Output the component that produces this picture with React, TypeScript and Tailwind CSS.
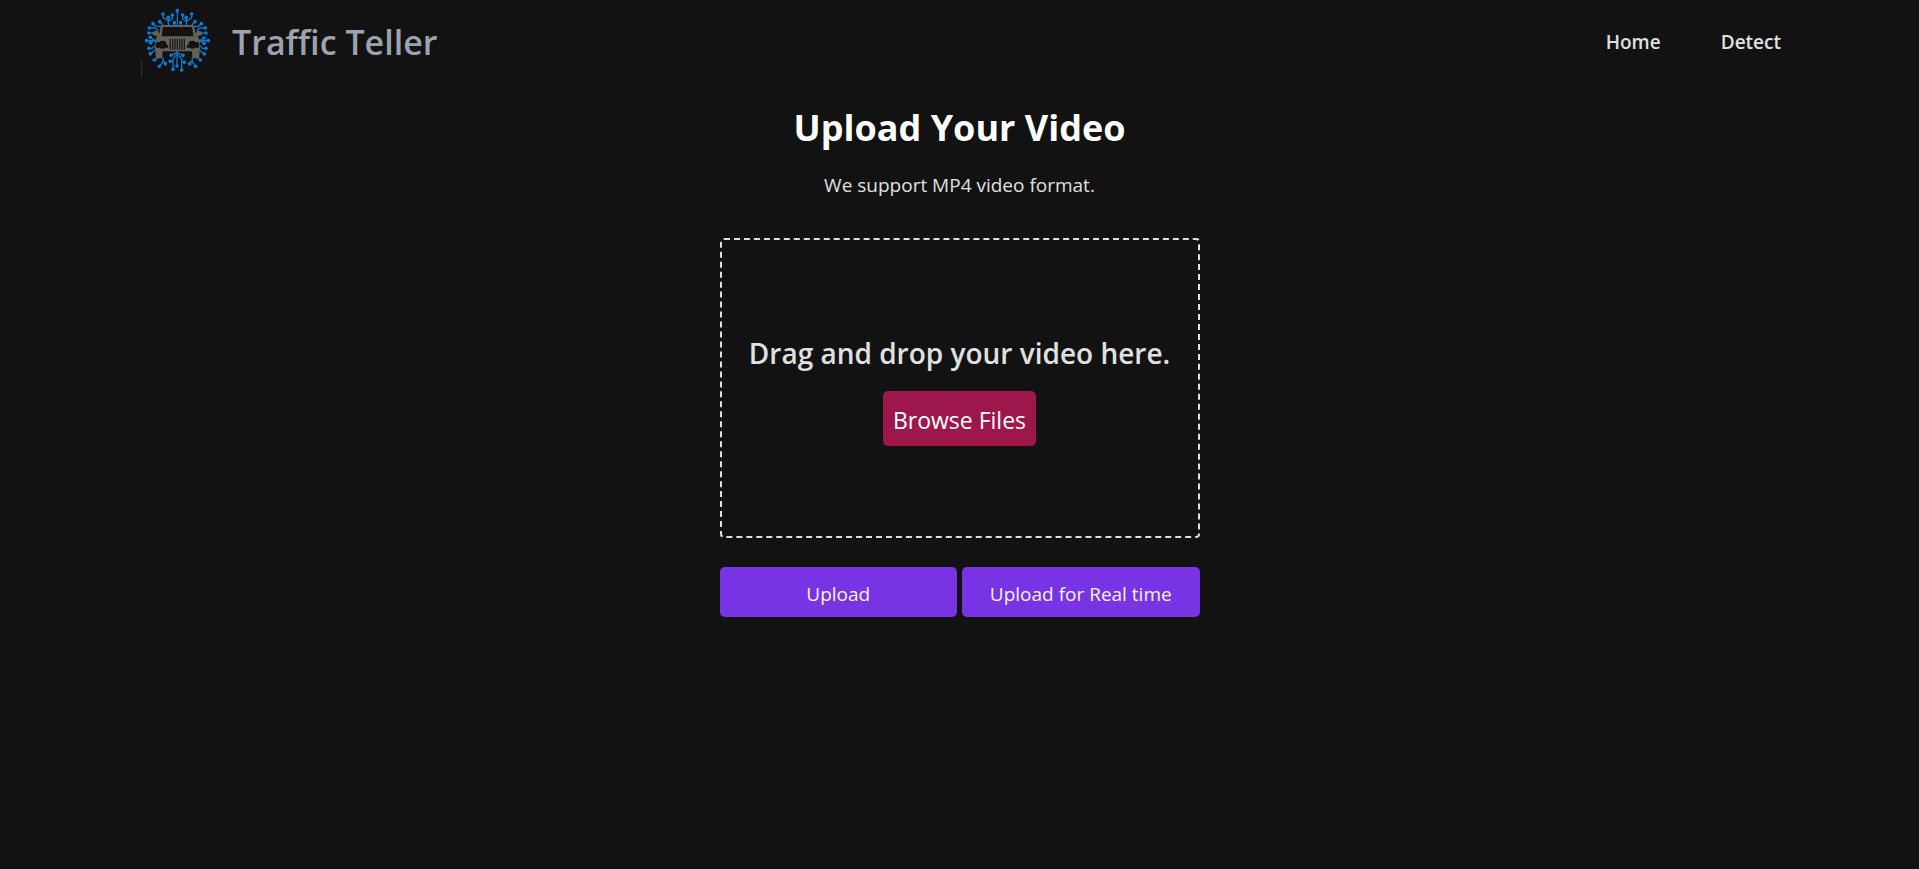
import { useRef } from "react";

type Trace = { d: string; x: number; y: number };

// Circuit traces radiating from the car; x and y place the terminal dot.
const traces: Trace[] = [
  { d: "M142 76V32", x: 142, y: 32 },
  { d: "M115 76V62L99 52V42", x: 99, y: 42 },
  { d: "M115 70V52", x: 115, y: 52 },
  { d: "M115 64L127 56V45", x: 127, y: 45 },
  { d: "M133 76V68", x: 133, y: 68 },
  { d: "M152 76V68", x: 152, y: 68 },
  { d: "M169 76V52", x: 169, y: 52 },
  { d: "M169 64L158 57V45", x: 158, y: 45 },
  { d: "M169 64L185 54V42", x: 185, y: 42 },
  { d: "M97 80V72L89 65", x: 89, y: 65 },
  { d: "M95 79H77L69 71", x: 69, y: 71 },
  { d: "M86 92L74 84H58", x: 58, y: 84 },
  { d: "M187 80V72L195 65", x: 195, y: 65 },
  { d: "M189 79H205L214 71", x: 214, y: 71 },
  { d: "M200 92L210 84H226", x: 226, y: 84 },
  { d: "M70 99H57", x: 57, y: 99 },
  { d: "M213 99H228", x: 228, y: 99 },
  { d: "M80 122H50", x: 50, y: 122 },
  { d: "M76 122L61 112", x: 61, y: 112 },
  { d: "M74 122L62 128", x: 62, y: 128 },
  { d: "M78 134L66 145H57", x: 57, y: 145 },
  { d: "M80 145L70 155L61 161", x: 61, y: 161 },
  { d: "M205 122H235", x: 235, y: 122 },
  { d: "M208 122L222 114", x: 222, y: 114 },
  { d: "M208 122L222 130", x: 222, y: 130 },
  { d: "M207 134L217 145H228", x: 228, y: 145 },
  { d: "M205 145L214 155L223 162", x: 223, y: 162 },
  { d: "M86 172L73 180", x: 73, y: 180 },
  { d: "M99 172V186L88 199", x: 88, y: 199 },
  { d: "M99 180L106 191", x: 106, y: 191 },
  { d: "M200 172L211 180", x: 211, y: 180 },
  { d: "M187 172V186L197 199", x: 197, y: 199 },
  { d: "M187 180L179 191", x: 179, y: 191 },
  { d: "M141 153V198", x: 141, y: 198 },
  { d: "M141 158L123 166", x: 123, y: 166 },
  { d: "M141 163L129 176V208", x: 129, y: 208 },
  { d: "M129 184H121", x: 121, y: 184 },
  { d: "M141 158L159 166", x: 159, y: 166 },
  { d: "M141 163L155 176V210", x: 155, y: 210 },
  { d: "M155 187H163", x: 163, y: 187 },
];

function Logo() {
  return (
    <svg viewBox="0 0 270 255" className="h-[85px] w-[90px] shrink-0" aria-hidden="true">
      <g fill="none" stroke="#0877d0" strokeWidth="4">
        {traces.map((t) => (
          <path key={t.d} d={t.d} />
        ))}
      </g>
      <g fill="#0a7bd8">
        {traces.map((t) => (
          <circle key={t.d} cx={t.x} cy={t.y} r="5.5" />
        ))}
      </g>
      <path
        fill="#64605a"
        d="M97 75H187Q192 75 193 81L197 102L199 95Q201 92 206 92L216 95Q220 99 215 106L203 109Q210 116 210 130L208 172Q207 175 203 175H190Q187 175 187 170L186 154H98L97 170Q97 175 93 175H80Q77 175 77 170L75 130Q75 116 82 109L70 106Q64 101 68 95L80 92Q85 92 86 97L88 102L91 81Q92 75 97 75Z"
      />
      <path fill="#121212" d="M102 81H183Q186 81 187 85L190 109H95L98 85Q99 81 102 81Z" />
      <g fill="#121212">
        <circle cx="98" cy="134" r="12" />
        <ellipse cx="84" cy="135" rx="7" ry="9" />
        <circle cx="110" cy="139" r="5" />
        <circle cx="187" cy="134" r="12" />
        <ellipse cx="201" cy="135" rx="7" ry="9" />
        <circle cx="175" cy="139" r="5" />
      </g>
      <path
        fill="none"
        stroke="#1a1a19"
        strokeWidth="4"
        d="M121 116V149M128 116V149M135 116V149M142 116V149M149 116V149M156 116V149M163 116V149"
      />
      <path stroke="#3a3a3a" strokeWidth="3" strokeDasharray="5 1" d="M35 180V231" />
    </svg>
  );
}

export default function App() {
  const picker = useRef<HTMLInputElement>(null);

  return (
    <div className="min-h-screen bg-[#121212] font-['Open_Sans','Noto_Sans',sans-serif] text-[#e0e0e0]">
      <header className="flex items-center justify-between pr-[138px] pl-[130px]">
        <a href="#" className="flex items-center gap-3 text-[34px] font-semibold text-[#9ca3af]">
          <Logo />
          Traffic Teller
        </a>
        <nav className="flex gap-[60px] text-[19px] font-semibold">
          <a href="#home">Home</a>
          <a href="#detect">Detect</a>
        </nav>
      </header>

      <main className="mx-auto flex w-[480px] max-w-full flex-col items-center">
        <h1 className="mt-4 text-[36px] leading-[54px] font-bold text-white">Upload Your Video</h1>
        <p className="mt-4 text-[19px] leading-[28px]">We support MP4 video format.</p>

        <section className="mt-[39px] flex h-[300px] w-full flex-col items-center justify-center gap-4 rounded-[4px] border-2 border-dashed border-[#e0e0e0]">
          <h2 className="text-[28px] leading-[44px] font-semibold whitespace-nowrap">
            Drag and drop your video here.
          </h2>
          <input ref={picker} type="file" accept="video/mp4" aria-label="Video file" className="hidden" />
          <button
            type="button"
            onClick={() => picker.current?.click()}
            className="h-[55px] rounded-[5px] bg-[#9d174d] px-[10px] pt-1 text-[23px] text-white"
          >
            Browse Files
          </button>
        </section>

        <div className="mt-[29px] grid w-full grid-cols-2 gap-[5px] text-[19px] text-[#f3f4f6]">
          <button type="button" className="h-[50px] rounded-[5px] bg-[#7733e4] pt-1">Upload</button>
          <button type="button" className="h-[50px] rounded-[5px] bg-[#7733e4] pt-1">Upload for Real time</button>
        </div>
      </main>
    </div>
  );
}
